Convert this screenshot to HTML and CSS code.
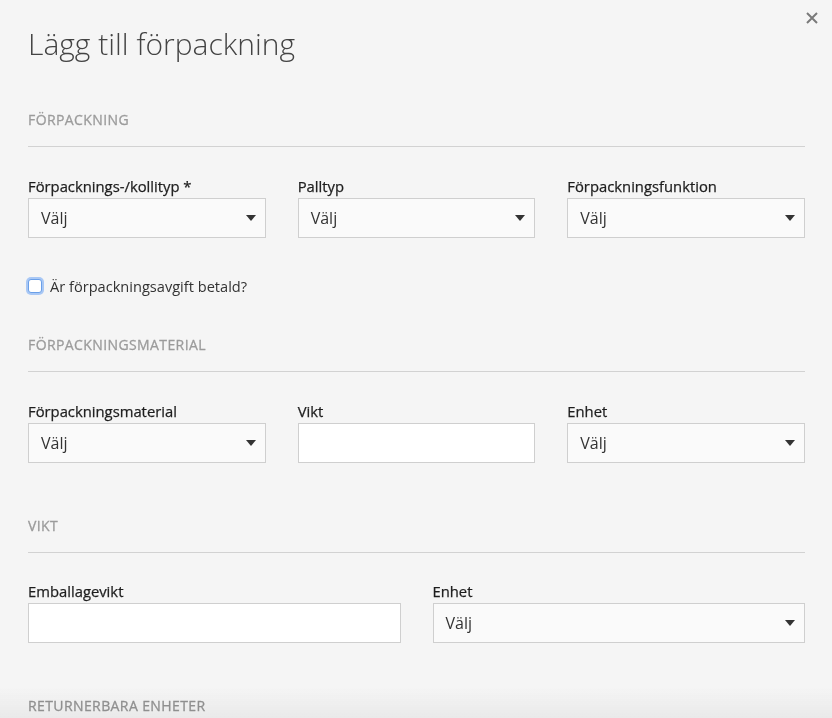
FILE: index.html
```html
<!DOCTYPE html>
<html lang="sv">
<head>
<meta charset="utf-8">
<title>Lägg till förpackning</title>
<link rel="stylesheet" href="styles.css">
</head>
<body>
<div class="fade"></div>
<div class="modal">
  <button class="close" aria-label="Stäng">
    <svg width="12" height="12" viewBox="0 0 12 12"><path d="M1 1L11 11M11 1L1 11" stroke="#7a7a7a" stroke-width="2" fill="none"/></svg>
  </button>
  <h1 class="title">Lägg till förpackning</h1>

  <section class="section s1">
    <h2 class="section-title">Förpackning</h2>
    <div class="grid three">
      <div class="field">
        <label class="label">Förpacknings-/kollityp *</label>
        <div class="select"><span>Välj</span><i class="caret"></i></div>
      </div>
      <div class="field">
        <label class="label">Palltyp</label>
        <div class="select"><span>Välj</span><i class="caret"></i></div>
      </div>
      <div class="field">
        <label class="label">Förpackningsfunktion</label>
        <div class="select"><span>Välj</span><i class="caret"></i></div>
      </div>
    </div>
    <label class="check"><span class="box"></span>Är förpackningsavgift betald?</label>
  </section>

  <section class="section s2">
    <h2 class="section-title">Förpackningsmaterial</h2>
    <div class="grid three">
      <div class="field">
        <label class="label">Förpackningsmaterial</label>
        <div class="select"><span>Välj</span><i class="caret"></i></div>
      </div>
      <div class="field">
        <label class="label">Vikt</label>
        <div class="input"></div>
      </div>
      <div class="field">
        <label class="label">Enhet</label>
        <div class="select"><span>Välj</span><i class="caret"></i></div>
      </div>
    </div>
  </section>

  <section class="section s3">
    <h2 class="section-title">Vikt</h2>
    <div class="grid two g3">
      <div class="field">
        <label class="label">Emballagevikt</label>
        <div class="input"></div>
      </div>
      <div class="field">
        <label class="label">Enhet</label>
        <div class="select"><span>Välj</span><i class="caret"></i></div>
      </div>
    </div>
  </section>

  <section class="section s3">
    <h2 class="section-title last">Returnerbara enheter</h2>
  </section>
</div>
</body>
</html>
```

FILE: styles.css
```css
* { box-sizing: border-box; }
html, body { margin: 0; height: 100%; overflow: hidden; }
body {
  background: #f5f5f5;
  font-family: "Open Sans", "Liberation Sans", sans-serif;
  color: #222;
}
.modal {
  position: relative;
  z-index: 1;
  padding: 0 27px 0 28px;
}
.close {
  position: absolute;
  top: 12px;
  right: 14px;
  width: 12px;
  height: 12px;
  padding: 0;
  border: 0;
  background: none;
  display: flex;
}
.title {
  margin: 0;
  padding-top: 24px;
  font-size: 30px;
  line-height: 40px;
  font-weight: 300;
  color: #444;
}
.section-title {
  margin: 0;
  font-size: 14px;
  line-height: 20px;
  font-weight: 400;
  -webkit-text-stroke: 0.3px #9b9b9b;
  text-transform: uppercase;
  letter-spacing: 0.4px;
  color: #9b9b9b;
  padding-bottom: 16px;
  border-bottom: 1px solid #d2d2d2;
}
.section-title.last {
  color: #8f8f8f;
  -webkit-text-stroke: 0.3px #8f8f8f;
}
.s1 { margin-top: 46px; }
.s2 { margin-top: 39px; }
.s3 { margin-top: 53px; }
.grid { display: grid; margin-top: 29px; }
.grid.g3 { margin-top: 28px; }
.grid.three { grid-template-columns: repeat(3, 1fr); column-gap: 32px; }
.grid.two { grid-template-columns: repeat(2, 1fr); column-gap: 32px; }
.field { display: flex; flex-direction: column; }
.label {
  font-size: 14.8px;
  line-height: 20px;
  height: 20px;
  font-weight: 400;
  -webkit-text-stroke: 0.25px #1e1e1e;
  color: #1e1e1e;
  margin-bottom: 2px;
}
.select, .input {
  height: 40px;
  border: 1px solid #cfcfcf;
  background: #fafafa;
}
.input { background: #fff; }
.select {
  display: flex;
  align-items: center;
  justify-content: space-between;
  padding: 0 8px 0 12px;
  font-size: 16px;
  color: #333;
}
.caret {
  width: 0; height: 0;
  border-left: 5px solid transparent;
  border-right: 5px solid transparent;
  border-top: 6px solid #333;
  margin-right: 1px;
}
.check {
  display: flex;
  align-items: center;
  gap: 8px;
  margin-top: 38px;
  height: 20px;
  font-size: 14.6px;
  color: #333;
}
.box {
  width: 14px; height: 14px;
  border: 1px solid #6a9fe8;
  border-radius: 3px;
  background: #fff;
  box-shadow: 0 0 0 2px #a9c8f5;
}
.fade {
  position: fixed;
  z-index: 0;
  left: 0; right: 0; bottom: 0;
  height: 30px;
  background: linear-gradient(to bottom, rgba(232,232,232,0), rgba(232,232,232,0.9));
}
```
